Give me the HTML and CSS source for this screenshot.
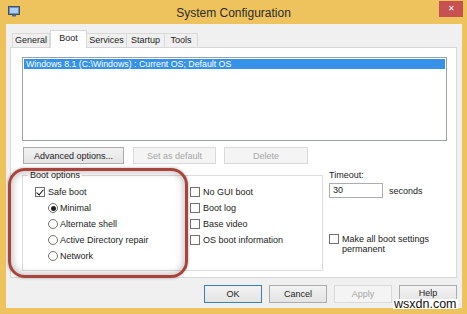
FILE: index.html
```html
<!DOCTYPE html>
<html lang="en">
<head>
    <meta charset="UTF-8">
    <meta name="viewport" content="width=device-width, initial-scale=1.0">
    <title>System Configuration</title>
    <link rel="stylesheet" href="styles.css">
</head>
<body>
    <div class="window">
        <div class="titlebar">
            <svg class="app-icon" width="12" height="11" viewBox="0 0 12 11">
                <rect x="0.5" y="0.5" width="11" height="8" fill="#6f8fb5" stroke="#3d4f6a"/>
                <rect x="2" y="2" width="8" height="5" fill="#a9d2f2"/>
                <rect x="4" y="8.5" width="4" height="2" fill="#55657a"/>
            </svg>
            <div class="title">System Configuration</div>
            <div class="close-btn">&#x2715;</div>
        </div>

        <div class="client">
            <div class="tabs">
                <div class="tab tab-general">General</div>
                <div class="tab tab-boot active">Boot</div>
                <div class="tab tab-services">Services</div>
                <div class="tab tab-startup">Startup</div>
                <div class="tab tab-tools">Tools</div>
            </div>

            <div class="panel">
                <div class="os-list">
                    <div class="os-item selected">Windows 8.1 (C:\Windows) : Current OS; Default OS</div>
                </div>

                <div class="list-buttons">
                    <button class="btn btn-advanced">Advanced options...</button>
                    <button class="btn btn-default" disabled>Set as default</button>
                    <button class="btn btn-delete" disabled>Delete</button>
                </div>

                <div class="lower">
                    <!-- Boot options -->
                    <fieldset class="boot-options">
                        <legend>Boot options</legend>
                        <div class="opt-columns">
                            <div class="opt-col left-col">
                                <div class="opt-row">
                                    <span class="checkbox checked"></span>
                                    <span>Safe boot</span>
                                </div>
                                <div class="opt-row sub">
                                    <span class="radio checked"></span>
                                    <span>Minimal</span>
                                </div>
                                <div class="opt-row sub">
                                    <span class="radio"></span>
                                    <span>Alternate shell</span>
                                </div>
                                <div class="opt-row sub">
                                    <span class="radio"></span>
                                    <span>Active Directory repair</span>
                                </div>
                                <div class="opt-row sub">
                                    <span class="radio"></span>
                                    <span>Network</span>
                                </div>
                            </div>
                            <div class="opt-col right-col">
                                <div class="opt-row">
                                    <span class="checkbox"></span>
                                    <span>No GUI boot</span>
                                </div>
                                <div class="opt-row">
                                    <span class="checkbox"></span>
                                    <span>Boot log</span>
                                </div>
                                <div class="opt-row">
                                    <span class="checkbox"></span>
                                    <span>Base video</span>
                                </div>
                                <div class="opt-row">
                                    <span class="checkbox"></span>
                                    <span>OS boot information</span>
                                </div>
                            </div>
                        </div>
                    </fieldset>

                    <div class="side">
                        <div class="side-label">Timeout:</div>
                        <div class="timeout-row">
                            <div class="textbox">30</div>
                            <span class="unit">seconds</span>
                        </div>
                        <div class="permanent">
                            <span class="checkbox"></span>
                            <span class="permanent-text">Make all boot settings<br>permanent</span>
                        </div>
                    </div>
                </div>
            </div>

            <div class="dialog-buttons">
                <button class="btn btn-dialog btn-ok">OK</button>
                <button class="btn btn-dialog">Cancel</button>
                <button class="btn btn-dialog" disabled>Apply</button>
                <button class="btn btn-dialog btn-help">Help</button>
            </div>
        </div>

        <div class="highlight-ring"></div>
        <div class="watermark">wsxdn.com</div>
    </div>
</body>
</html>
```

FILE: styles.css
```css
        body {
            margin: 0;
            padding: 0;
            font-family: 'Liberation Sans', Arial, sans-serif;
            font-size: 9px;
            color: #222;
        }
        .window {
            position: relative;
            width: 467px;
            height: 314px;
            background-color: #eec35d;
            display: flex;
            flex-direction: column;
            overflow: hidden;
        }
        .titlebar {
            height: 24px;
            display: flex;
            align-items: flex-start;
            position: relative;
        }
        .app-icon {
            margin: 6px 0 0 8px;
        }
        .title {
            position: absolute;
            left: 0;
            right: 0;
            top: 6px;
            text-align: center;
            font-size: 12px;
            color: #2b2b2b;
            pointer-events: none;
        }
        .close-btn {
            margin-left: auto;
            margin-top: 1px;
            margin-right: 4px;
            width: 24px;
            height: 16px;
            background-color: #c75050;
            color: #fff;
            font-size: 8px;
            line-height: 16px;
            text-align: center;
        }
        .client {
            margin: 0 5px 0 6px;
            height: 284px;
            background-color: #f0f0f0;
            padding: 0 5px 0 4px;
            box-sizing: border-box;
        }
        .tabs {
            height: 23px;
            display: flex;
            align-items: flex-end;
            padding-left: 2px;
            position: relative;
            z-index: 2;
        }
        .tab {
            height: 14px;
            line-height: 13px;
            box-sizing: border-box;
            border: 1px solid #d9d9d9;
            border-bottom: none;
            background-color: #f0f0f0;
            text-align: center;
        }
        .tab + .tab {
            border-left: none;
        }
        .tab.active {
            height: 18px;
            margin-bottom: -1px;
            background-color: #fff;
            border-left: 1px solid #d9d9d9;
            line-height: 14px;
        }
        .tab-general { width: 38px; }
        .tab-boot { width: 37px; }
        .tab-services { width: 40px; border-left: none; }
        .tab-startup { width: 38px; }
        .tab-tools { width: 33px; }

        .panel {
            height: 231px;
            box-sizing: border-box;
            background-color: #fff;
            border: 1px solid #d9d9d9;
            padding: 9px 0 0 11px;
        }
        .os-list {
            width: 425px;
            height: 84px;
            box-sizing: border-box;
            border: 1px solid #9da2a8;
            padding: 1px;
        }
        .os-item {
            height: 10px;
            line-height: 10px;
            padding-left: 2px;
            white-space: nowrap;
            font-size: 8.8px;
        }
        .os-item.selected {
            background-color: #3592e8;
            color: #fff;
        }
        .list-buttons {
            display: flex;
            margin-top: 6px;
            padding-left: 1px;
        }
        .btn {
            font-family: inherit;
            font-size: 9px;
            color: #222;
            height: 17px;
            padding: 0;
            box-sizing: border-box;
            border: 1px solid #acacac;
            background: linear-gradient(#f2f2f2, #e4e4e4);
            border-radius: 0;
        }
        .btn:disabled {
            color: #a6a6a6;
            background: #f4f4f4;
            border-color: #dadada;
        }
        .btn-advanced { width: 101px; }
        .btn-default { width: 83px; margin-left: 9px; }
        .btn-delete { width: 84px; margin-left: 8px; }

        .lower {
            display: flex;
            margin-top: 6px;
        }
        .boot-options {
            margin: 0;
            padding: 3px 0 0 12px;
            width: 301px;
            height: 101px;
            box-sizing: border-box;
            border: 1px solid #dcdcdc;
        }
        .boot-options legend {
            margin-left: -7px;
            padding: 0 2px;
            line-height: 11px;
        }
        .opt-columns {
            display: flex;
        }
        .left-col {
            width: 155px;
        }
        .opt-row {
            height: 16px;
            display: flex;
            align-items: center;
            white-space: nowrap;
        }
        .opt-row.sub {
            padding-left: 13px;
        }
        .checkbox {
            width: 10px;
            height: 10px;
            box-sizing: border-box;
            border: 1px solid #707070;
            background-color: #fff;
            margin-right: 3px;
            position: relative;
            flex-shrink: 0;
        }
        .checkbox.checked::after {
            content: "";
            position: absolute;
            left: 2px;
            top: 0px;
            width: 3px;
            height: 6px;
            border: solid #111;
            border-width: 0 1.5px 1.5px 0;
            transform: rotate(40deg);
        }
        .radio {
            width: 10px;
            height: 10px;
            box-sizing: border-box;
            border: 1px solid #707070;
            border-radius: 50%;
            background-color: #fff;
            margin-right: 2px;
            position: relative;
            flex-shrink: 0;
        }
        .radio.checked::after {
            content: "";
            position: absolute;
            left: 1.5px;
            top: 1.5px;
            width: 5px;
            height: 5px;
            border-radius: 50%;
            background-color: #222;
        }
        .side {
            margin-left: 6px;
        }
        .side-label {
            line-height: 11px;
        }
        .timeout-row {
            display: flex;
            align-items: center;
            margin-top: 2px;
        }
        .textbox {
            width: 54px;
            height: 15px;
            box-sizing: border-box;
            border: 1px solid #abadb3;
            padding-left: 3px;
            line-height: 13px;
            background-color: #fff;
        }
        .unit {
            margin-left: 6px;
        }
        .permanent {
            display: flex;
            align-items: flex-start;
            margin-top: 36px;
        }
        .permanent-text {
            line-height: 10px;
        }

        .dialog-buttons {
            display: flex;
            justify-content: flex-end;
            gap: 7px;
            margin-top: 7px;
        }
        .btn-dialog {
            width: 58px;
            height: 18px;
            line-height: 14px;
        }
        .btn-help {
            padding-bottom: 3px;
        }
        .btn-ok {
            border-color: #3c7fb1;
        }

        .highlight-ring {
            position: absolute;
            left: 8px;
            top: 168px;
            width: 180px;
            height: 110px;
            box-sizing: border-box;
            border: 3px solid #a8443b;
            border-radius: 17px;
            box-shadow: inset 0 0 6px 2px rgba(0, 0, 0, 0.22), 0 0 3px rgba(0, 0, 0, 0.35);
            pointer-events: none;
        }
        .watermark {
            position: absolute;
            left: 393px;
            top: 299px;
            padding: 0 1px;
            background-color: #fff;
            color: #111;
            font-size: 12.5px;
            line-height: 10px;
        }
```
